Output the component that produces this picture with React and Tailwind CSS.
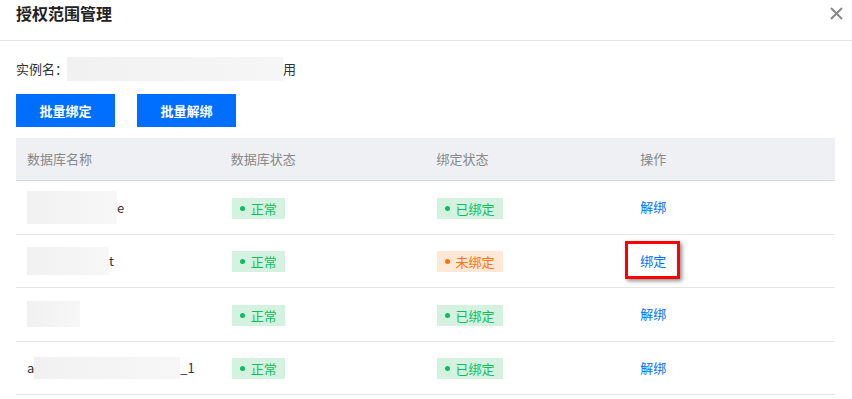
import React from "react";

const font = { fontFamily: '"Noto Sans CJK SC", "Noto Sans", sans-serif' };

function Tag({ type, text }) {
  const green = type === "green";
  return (
    <span
      className={`inline-flex items-center h-[21px] pl-[8px] pr-[8px] text-[13px] leading-none ${
        green ? "bg-[#d5f2e1] text-[#0abf5b]" : "bg-[#ffe8d5] text-[#ff7200]"
      }`}
    >
      <span className={`w-[5px] h-[5px] rounded-full mr-[6px] ${green ? "bg-[#0abf5b]" : "bg-[#ff7200]"}`} />
      {text}
    </span>
  );
}

function Blur({ w, h }) {
  return <span className="inline-block bg-gradient-to-r from-[#f1f1f1] to-[#f7f7f7]" style={{ width: w, height: h }} />;
}

const rows = [
  { name: <><Blur w={90} h={33} /><span>e</span></>, bound: true, action: "解绑" },
  { name: <><Blur w={82} h={28} /><span>t</span></>, bound: false, action: "绑定", boxed: true },
  { name: <><Blur w={53} h={26} /></>, bound: true, action: "解绑" },
  { name: <><span>a</span><Blur w={146} h={22} /><span>_1</span></>, bound: true, action: "解绑" },
];

export default function App() {
  return (
    <div className="w-[852px] h-[399px] bg-white overflow-hidden text-[#333]" style={font}>
      <div className="h-[41px] border-b border-[#e5e5e5] pl-[16px] pr-[9px] flex justify-between items-start">
        <div className="mt-[2px] text-[16px] font-bold leading-[22px] text-[#222]">授权范围管理</div>
        <svg className="mt-[7px]" width="13" height="13" viewBox="0 0 13 13">
          <path d="M1 1L12 12M12 1L1 12" stroke="#888" strokeWidth="2" />
        </svg>
      </div>
      <div className="px-[16px]">
        <div className="mt-[16px] h-[24px] flex items-center text-[13px]">
          <span>实例名：</span>
          <span className="inline-block w-[216px] h-[24px] bg-gradient-to-r from-[#f1f1f1] to-[#f6f6f6] -ml-[1px]" />
          <span>用</span>
        </div>
        <div className="mt-[13px] flex gap-[22px]">
          <button className="w-[99px] h-[33px] bg-[#006eff] text-white text-[13px] font-bold">批量绑定</button>
          <button className="w-[99px] h-[33px] bg-[#006eff] text-white text-[13px] font-bold">批量解绑</button>
        </div>
        <div className="mt-[11px] w-[819px]">
          <div className="grid grid-cols-4 h-[43px] bg-[#eef0f4] border-b border-[#d5d9e2] text-[13px] text-[#888] items-center">
            <div className="pl-[11px]">数据库名称</div>
            <div className="pl-[10px]">数据库状态</div>
            <div className="pl-[11px]">绑定状态</div>
            <div className="pl-[10px]">操作</div>
          </div>
          {rows.map((r, i) => (
            <div key={i} className="grid grid-cols-4 h-[53.5px] border-b border-[#e5e5e5] items-center text-[13px]">
              <div className="pl-[11px] flex items-center">{r.name}</div>
              <div className="pl-[11px]"><Tag type="green" text="正常" /></div>
              <div className="pl-[11px]">
                {r.bound ? <Tag type="green" text="已绑定" /> : <Tag type="orange" text="未绑定" />}
              </div>
              <div className="pl-[10px]">
                <span className="relative inline-block leading-[20px] text-[#006eff]">
                  {r.action}
                  {r.boxed && (
                    <span className="absolute -left-[15px] -top-[10px] w-[55px] h-[38px] border-[3px] border-[#ff0000] shadow-[2px_2px_4px_rgba(0,0,0,0.45)]" />
                  )}
                </span>
              </div>
            </div>
          ))}
        </div>
      </div>
    </div>
  );
}
